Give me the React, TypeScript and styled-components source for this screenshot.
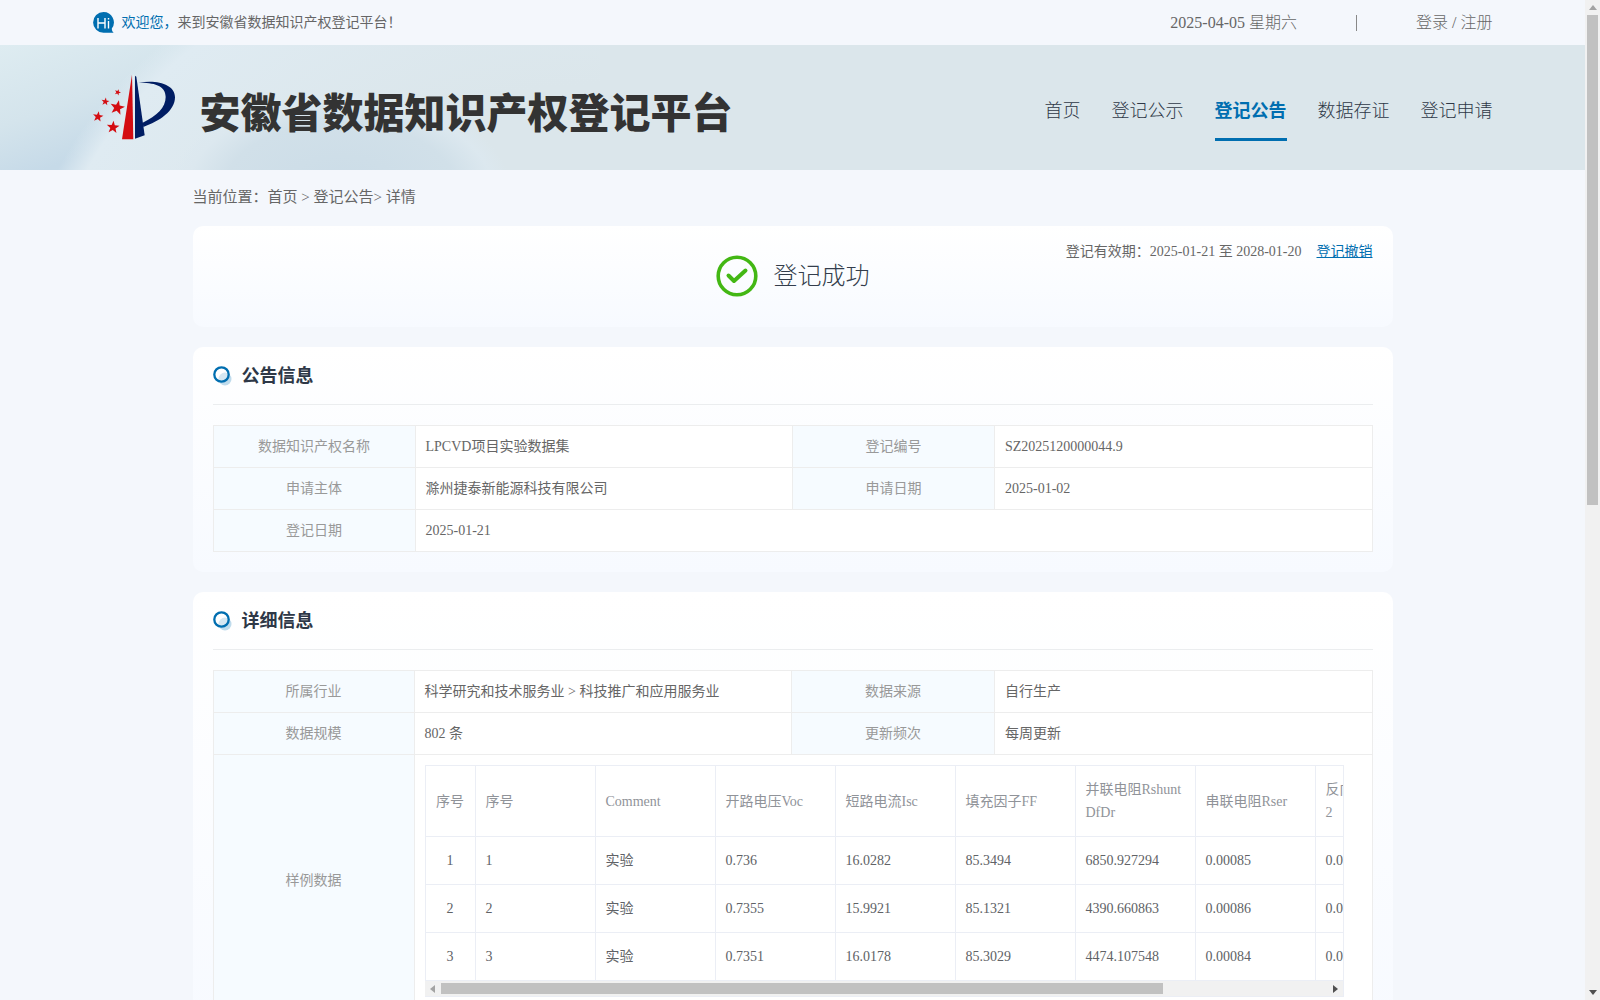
import React from "react";
import styled, { createGlobalStyle } from "styled-components";

const line = "#ededed";
const gridLine = "#ebeef5";
const brand = "#006eb0";

const GlobalStyle = createGlobalStyle`
  * { box-sizing: border-box; }
  body {
    margin: 0;
    background: #f4f7fc;
    color: #666;
    font-family: "Liberation Serif", "Noto Sans CJK SC", serif;
    font-size: 14px;
    font-weight: 400;
    line-height: 20px;
  }
  a { color: inherit; text-decoration: none; }
`;

const Frame = styled.div`
  display: grid;
  grid-template-columns: minmax(0, 1fr) 15px;
  height: 100vh;
  overflow: hidden;
`;

const Page = styled.div`
  min-width: 0;
  overflow: hidden;
`;

const Inner = styled.div`
  width: 100%;
  max-width: 1400px;
  margin: 0 auto;
  display: flex;
  align-items: center;
  justify-content: space-between;
`;

const TopBar = styled.div`
  display: flex;
  height: 45px;
`;

const Welcome = styled.div`
  display: flex;
  align-items: center;
  gap: 8px;
`;

const WelcomeText = styled.p`
  margin: 0;
`;

const Accent = styled.span`
  color: ${brand};
`;

const Session = styled.div`
  display: flex;
  align-items: center;
  font-size: 16px;
  font-weight: 300;
`;

const Divider = styled.span`
  width: 1px;
  height: 16px;
  margin: 0 59px;
  background: #888;
`;

const Header = styled.header`
  display: flex;
  height: 125px;
  background:
    radial-gradient(ellipse 155px 90px at 340px 145px, #cbdce7 0%, #d1e0e9 75%, #dce8ef 98%, #dce8ef00 110%) no-repeat,
    radial-gradient(ellipse 570px 400px at 600px 260px, #dbe6eb 0%, #dbe6eb 55%, #dfebf2 96%, #dfebf200 101%) 0 0 / 600px 100% no-repeat,
    linear-gradient(160deg, #deecf1 0%, #d4e4ec 35%, #c6dae8 60%) 0 0 / 300px 100% no-repeat,
    #dbe6eb;
`;

const Brand = styled.a`
  display: flex;
  align-items: center;
  gap: 24px;
`;

const SiteTitle = styled.h1`
  margin: 0;
  padding-top: 5px;
  color: #333;
  font-family: "Noto Sans CJK SC", sans-serif;
  font-size: 41px;
  font-weight: 900;
  line-height: 48px;
  white-space: nowrap;
`;

const Nav = styled.nav`
  display: flex;
  gap: 31px;
  padding-top: 5px;
`;

const NavLink = styled.a<{ $active?: boolean }>`
  padding: 18px 0 14px;
  border-bottom: 3px solid ${(p) => (p.$active ? brand : "transparent")};
  color: ${(p) => (p.$active ? brand : "#2e3847")};
  font-size: 18px;
  font-weight: ${(p) => (p.$active ? 700 : 300)};
  line-height: 26px;
  white-space: nowrap;
`;

const Main = styled.main`
  width: 100%;
  max-width: 1200px;
  margin: 0 auto;
`;

const Breadcrumb = styled.nav`
  padding: 16px 0 17px;
  font-size: 15px;
  line-height: 23px;
`;

const Card = styled.section`
  margin-bottom: 20px;
  padding: 0 20px 20px;
  border-radius: 10px;
  background: linear-gradient(180deg, #fff 0%, #f7faff 100%);
`;

const StatusCard = styled(Card)`
  display: grid;
  grid-template-columns: 1fr auto 1fr;
  padding: 16px 20px 30px;
`;

const Status = styled.div`
  grid-column: 2;
  display: flex;
  align-items: center;
  gap: 16px;
  padding-top: 12px;
  height: 55px;
  color: #333d4c;
  font-size: 24px;
  font-weight: 300;
  line-height: 32px;
`;

const Validity = styled.p`
  margin: 0;
  text-align: right;
`;

const RevokeLink = styled.a`
  margin-left: 15px;
  color: ${brand};
  text-decoration: underline;
`;

const CardTitle = styled.h2`
  display: flex;
  align-items: center;
  gap: 10px;
  height: 58px;
  margin: 0 0 20px;
  border-bottom: 1px solid #ebedef;
  color: #2e3847;
  font-size: 18px;
  font-weight: 700;
  line-height: 26px;
`;

const InfoTable = styled.table`
  width: 100%;
  border-collapse: collapse;
  table-layout: fixed;
`;

const Label = styled.th`
  height: 42px;
  padding: 0 10px;
  border: 1px solid ${line};
  background: #f6fbff;
  color: #999;
  font-weight: 400;
  text-align: center;
`;

const Value = styled.td`
  padding: 0 10px;
  border: 1px solid ${line};
  background: #fff;
`;

const SampleCell = styled(Value)`
  padding: 10px 28px 10px 10px;
`;

const SampleBox = styled.div`
  overflow: hidden;
  border: 1px solid ${gridLine};
  border-top: 0;
  border-left: 0;
`;

const SampleTable = styled.table`
  width: 1131px;
  border-collapse: collapse;
  table-layout: fixed;
`;

const SampleHead = styled.th<{ $center?: boolean }>`
  height: 71px;
  padding: 12px 10px;
  border: 1px solid ${gridLine};
  color: #909399;
  font-weight: 400;
  line-height: 23px;
  text-align: ${(p) => (p.$center ? "center" : "left")};
  word-break: break-all;
`;

const SampleData = styled.td<{ $center?: boolean }>`
  height: 48px;
  padding: 0 10px;
  border: 1px solid ${gridLine};
  color: #606266;
  line-height: 23px;
  text-align: ${(p) => (p.$center ? "center" : "left")};
`;

const HorizontalBar = styled.div`
  display: grid;
  grid-template-columns: 16px 723fr 166fr 14px;
  align-items: center;
  justify-items: center;
  height: 15px;
  background: #f1f1f1;
`;

const HorizontalThumb = styled.span`
  width: 100%;
  height: 11px;
  background: #c1c1c1;
`;

const VerticalBar = styled.div`
  display: grid;
  grid-template-rows: 15px 49fr 48fr 15px;
  align-items: center;
  justify-items: center;
  background: #f1f1f1;
`;

const VerticalThumb = styled.span`
  width: 11px;
  height: 100%;
  background: #c1c1c1;
`;

const Arrow = styled.svg<{ $end?: boolean }>`
  display: block;
  fill: ${(p) => (p.$end ? "#505050" : "#a3a3a3")};
`;

const STAR = "M0-10 2.4-3.3 9.5-3.1 3.9 1.3 5.9 8.1 0 4.1-5.9 8.1-3.9 1.3-9.5-3.1-2.4-3.3Z";

function HiIcon() {
  return (
    <svg width="21" height="21" viewBox="0 0 21 21" aria-hidden="true">
      <path d="M10.5 0a10.4 10.4 0 0 1 8.3 16.6c0 2 .7 3.2 1.9 4.2H10.5a10.4 10.4 0 0 1 0-20.8Z" fill={brand} />
      <g fill="none" stroke="#fff" strokeWidth="1.4">
        <path d="M5 6v10.500M12 6v10.500M5 11h7M15.500 9v7.500M15.500 6v1.500" />
      </g>
    </svg>
  );
}

function Logo() {
  return (
    <svg width="83" height="67" viewBox="24 28 249 201" aria-hidden="true">
      <g fill="#d40d12">
        <path d="M141 30 145 224H111Z" />
        <path d={STAR} transform="translate(97 129) rotate(12) scale(2.300)" />
        <path d={STAR} transform="translate(84 188) rotate(5) scale(2)" />
        <path d={STAR} transform="translate(39 156) rotate(8) scale(1.650)" />
        <path d={STAR} transform="translate(61 111) rotate(8) scale(1.250)" />
        <path d={STAR} transform="translate(98 83) rotate(20) scale(1)" />
      </g>
      <g fill="#001d63">
        <path d="M150 33 154 36 179 212 150 222Z" />
        <path d="M161 54C215 44 270 58 270 98C270 139 223 170 175 187L173 174C216 154 242 128 242 97C242 61 205 54 161 54Z" />
      </g>
      <path d="M145 30 148 224" stroke="#e8eff4" strokeWidth="3" />
    </svg>
  );
}

function SuccessIcon() {
  return (
    <svg width="42" height="42" viewBox="0 0 42 42" fill="none" stroke="#43b714" aria-hidden="true">
      <circle cx="21" cy="21" r="18.800" strokeWidth="3.600" />
      <path d="m12.500 20.500 5.500 5.500 11.500-10.500" strokeWidth="4" strokeLinecap="round" strokeLinejoin="round" />
    </svg>
  );
}

function RingIcon() {
  return (
    <svg width="19" height="20" viewBox="0 0 19 20" aria-hidden="true">
      <circle cx="12" cy="13" r="6.500" fill="#bfdbec" />
      <circle cx="8.500" cy="8.500" r="7.200" fill="#fff" fillOpacity=".35" stroke={brand} strokeWidth="2.300" />
    </svg>
  );
}

const navItems = ["首页", "登记公示", "登记公告", "数据存证", "登记申请"];

const columns = [
  "序号", "序号", "Comment", "开路电压Voc", "短路电流Isc", "填充因子FF",
  "并联电阻RshuntDfDr", "串联电阻Rser", "反向漏电流Irev2",
];

const samples = [
  ["1", "1", "实验", "0.736", "16.0282", "85.3494", "6850.927294", "0.00085", "0.0"],
  ["2", "2", "实验", "0.7355", "15.9921", "85.1321", "4390.660863", "0.00086", "0.0"],
  ["3", "3", "实验", "0.7351", "16.0178", "85.3029", "4474.107548", "0.00084", "0.0"],
];

function InfoColumns({ first, third }: { first: number; third: number }) {
  return (
    <colgroup>
      <col style={{ width: first }} />
      <col />
      <col style={{ width: third }} />
      <col />
    </colgroup>
  );
}

function SampleGrid() {
  return (
    <SampleBox>
      <SampleTable>
        <colgroup>
          {columns.map((_, i) => (
            <col key={i} style={{ width: i === 0 ? 50 : 120 }} />
          ))}
          <col />
        </colgroup>
        <thead>
          <tr>
            {columns.map((name, i) => (
              <SampleHead key={i} $center={i === 0}>{name}</SampleHead>
            ))}
            <SampleHead />
          </tr>
        </thead>
        <tbody>
          {samples.map((row) => (
            <tr key={row[0]}>
              {row.map((cell, i) => (
                <SampleData key={i} $center={i === 0}>{cell}</SampleData>
              ))}
              <SampleData />
            </tr>
          ))}
        </tbody>
      </SampleTable>
      <HorizontalBar aria-hidden="true">
        <Arrow width="5" height="8" viewBox="0 0 5 8"><path d="M5 0v8L0 4Z" /></Arrow>
        <HorizontalThumb />
        <span />
        <Arrow $end width="5" height="8" viewBox="0 0 5 8"><path d="M0 0v8l5-4Z" /></Arrow>
      </HorizontalBar>
    </SampleBox>
  );
}

export default function App() {
  return (
    <Frame lang="zh-CN">
      <GlobalStyle />
      <Page>
        <TopBar>
          <Inner>
            <Welcome>
              <HiIcon />
              <WelcomeText><Accent>欢迎您，</Accent>来到安徽省数据知识产权登记平台！</WelcomeText>
            </Welcome>
            <Session>
              <span>2025-04-05 星期六</span>
              <Divider />
              <span><a href="#login">登录</a> / <a href="#register">注册</a></span>
            </Session>
          </Inner>
        </TopBar>
        <Header>
          <Inner>
            <Brand href="#home">
              <Logo />
              <SiteTitle>安徽省数据知识产权登记平台</SiteTitle>
            </Brand>
            <Nav>
              {navItems.map((item) => (
                <NavLink key={item} href="#nav" $active={item === "登记公告"}>{item}</NavLink>
              ))}
            </Nav>
          </Inner>
        </Header>
        <Main>
          <Breadcrumb>
            当前位置：<a href="#home">首页</a> &gt; <a href="#notice">登记公告</a>&gt; 详情
          </Breadcrumb>
          <StatusCard>
            <Status><SuccessIcon />登记成功</Status>
            <Validity>
              登记有效期：2025-01-21 至 2028-01-20<RevokeLink href="#revoke">登记撤销</RevokeLink>
            </Validity>
          </StatusCard>
          <Card>
            <CardTitle><RingIcon />公告信息</CardTitle>
            <InfoTable>
              <InfoColumns first={202} third={202} />
              <tbody>
                <tr>
                  <Label>数据知识产权名称</Label><Value>LPCVD项目实验数据集</Value>
                  <Label>登记编号</Label><Value>SZ2025120000044.9</Value>
                </tr>
                <tr>
                  <Label>申请主体</Label><Value>滁州捷泰新能源科技有限公司</Value>
                  <Label>申请日期</Label><Value>2025-01-02</Value>
                </tr>
                <tr>
                  <Label>登记日期</Label><Value colSpan={3}>2025-01-21</Value>
                </tr>
              </tbody>
            </InfoTable>
          </Card>
          <Card>
            <CardTitle><RingIcon />详细信息</CardTitle>
            <InfoTable>
              <InfoColumns first={201} third={203} />
              <tbody>
                <tr>
                  <Label>所属行业</Label><Value>科学研究和技术服务业 &gt; 科技推广和应用服务业</Value>
                  <Label>数据来源</Label><Value>自行生产</Value>
                </tr>
                <tr>
                  <Label>数据规模</Label><Value>802 条</Value>
                  <Label>更新频次</Label><Value>每周更新</Value>
                </tr>
                <tr>
                  <Label>样例数据</Label>
                  <SampleCell colSpan={3}><SampleGrid /></SampleCell>
                </tr>
              </tbody>
            </InfoTable>
          </Card>
        </Main>
      </Page>
      <VerticalBar aria-hidden="true">
        <Arrow width="8" height="5" viewBox="0 0 8 5"><path d="M0 5h8L4 0Z" /></Arrow>
        <VerticalThumb />
        <span />
        <Arrow $end width="8" height="5" viewBox="0 0 8 5"><path d="M0 0h8L4 5Z" /></Arrow>
      </VerticalBar>
    </Frame>
  );
}
